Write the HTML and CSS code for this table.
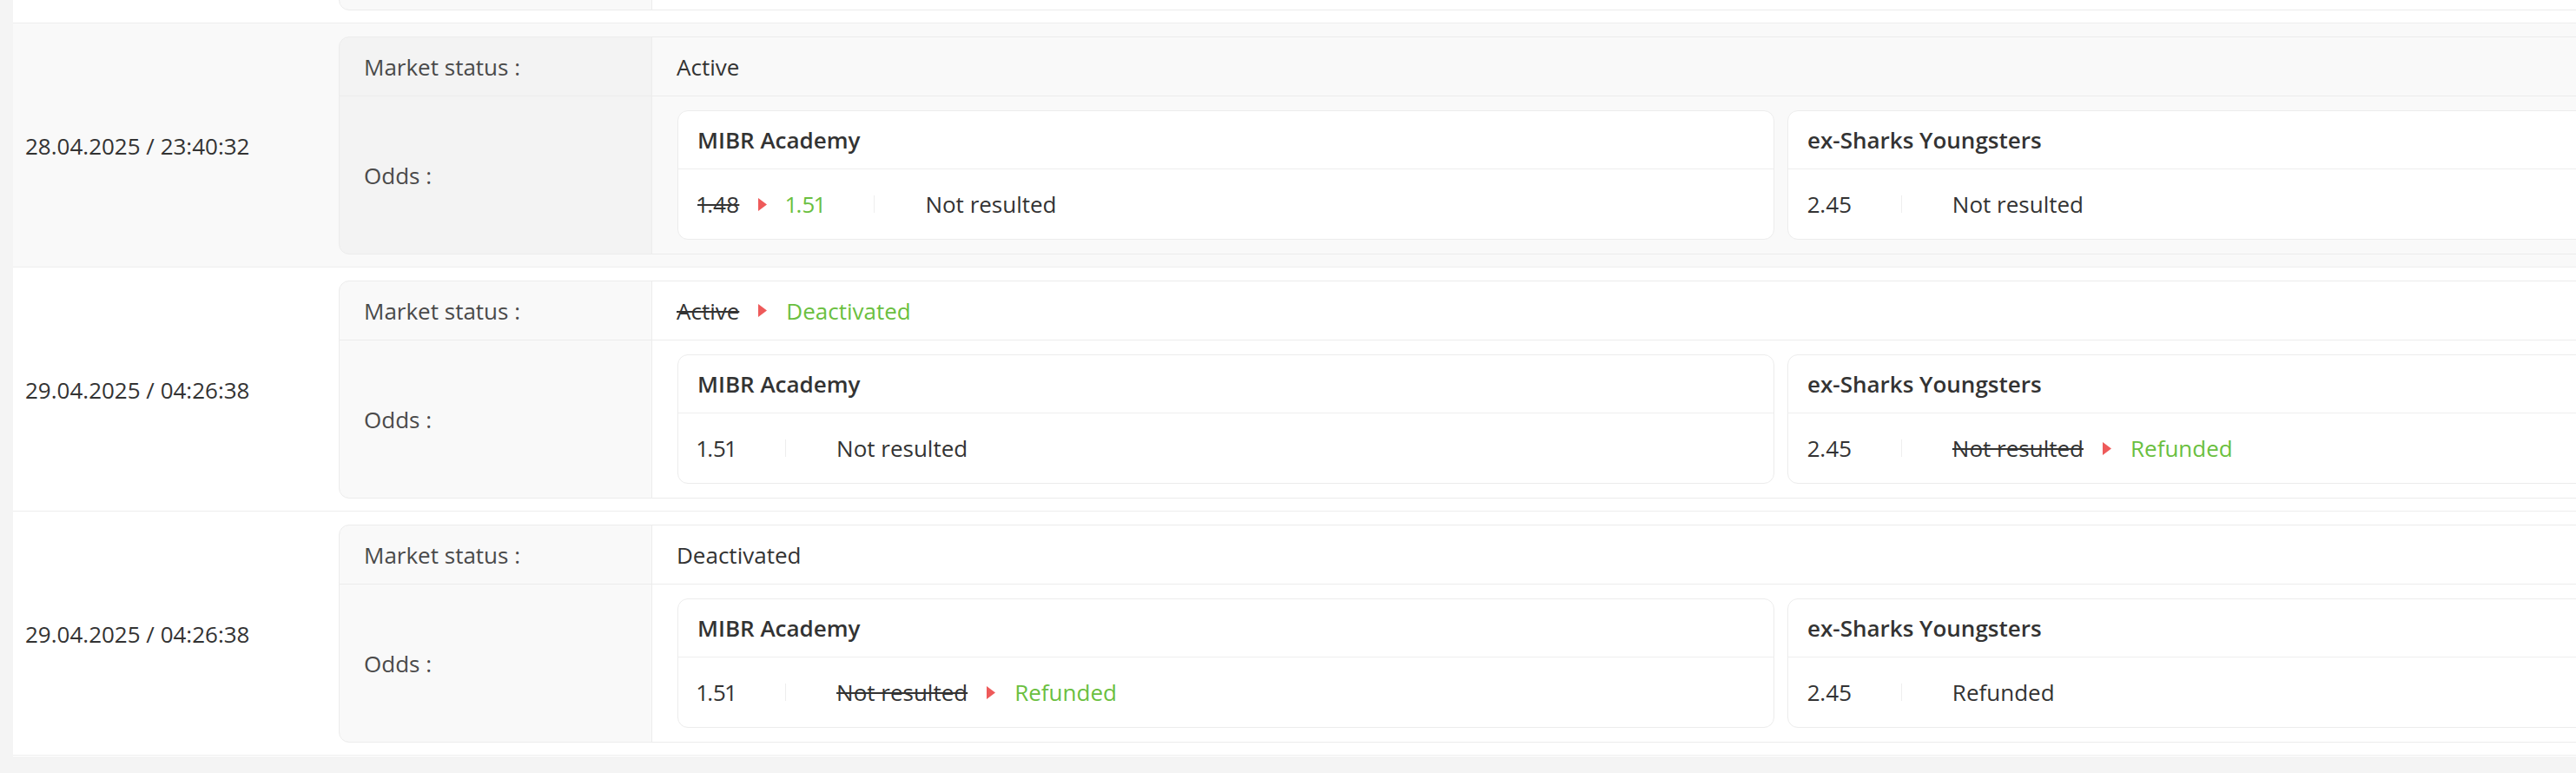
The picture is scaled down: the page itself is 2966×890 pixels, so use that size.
FILE: index.html
```html
<!DOCTYPE html>
<html lang="en">
<head>
<meta charset="utf-8">
<title>Market history</title>
<link rel="stylesheet" href="styles.css">
</head>
<body>
<div class="panel">

  <div class="row row--tail">
    <div class="row__date"></div>
    <div class="info">
      <div class="info__line info__line--status">
        <div class="info__label"></div>
        <div class="info__value"></div>
      </div>
      <div class="info__line info__line--odds">
        <div class="info__label"></div>
        <div class="info__value info__value--cards">
          <div class="sel">
            <div class="sel__head"></div>
            <div class="sel__body"></div>
          </div>
          <div class="sel">
            <div class="sel__head"></div>
            <div class="sel__body"></div>
          </div>
        </div>
      </div>
    </div>
  </div>

  <div class="row row--hover">
    <div class="row__date">28.04.2025 / 23:40:32</div>
    <div class="info">
      <div class="info__line info__line--status">
        <div class="info__label">Market status :</div>
        <div class="info__value">Active</div>
      </div>
      <div class="info__line info__line--odds">
        <div class="info__label">Odds :</div>
        <div class="info__value info__value--cards">
          <div class="sel">
            <div class="sel__head">MIBR Academy</div>
            <div class="sel__body">
              <div class="sel__odds"><span class="old">1.48</span><svg class="arrow" viewBox="0 0 10 15" width="10" height="15"><path d="M0 0 L10 7.5 L0 15 Z"/></svg><span class="new">1.51</span></div>
              <div class="sel__result">Not resulted</div>
            </div>
          </div>
          <div class="sel">
            <div class="sel__head">ex-Sharks Youngsters</div>
            <div class="sel__body">
              <div class="sel__odds">2.45</div>
              <div class="sel__result">Not resulted</div>
            </div>
          </div>
        </div>
      </div>
    </div>
  </div>

  <div class="row">
    <div class="row__date">29.04.2025 / 04:26:38</div>
    <div class="info">
      <div class="info__line info__line--status">
        <div class="info__label">Market status :</div>
        <div class="info__value"><span class="old">Active</span><svg class="arrow" viewBox="0 0 10 15" width="10" height="15"><path d="M0 0 L10 7.5 L0 15 Z"/></svg><span class="new">Deactivated</span></div>
      </div>
      <div class="info__line info__line--odds">
        <div class="info__label">Odds :</div>
        <div class="info__value info__value--cards">
          <div class="sel">
            <div class="sel__head">MIBR Academy</div>
            <div class="sel__body">
              <div class="sel__odds">1.51</div>
              <div class="sel__result">Not resulted</div>
            </div>
          </div>
          <div class="sel">
            <div class="sel__head">ex-Sharks Youngsters</div>
            <div class="sel__body">
              <div class="sel__odds">2.45</div>
              <div class="sel__result"><span class="old">Not resulted</span><svg class="arrow" viewBox="0 0 10 15" width="10" height="15"><path d="M0 0 L10 7.5 L0 15 Z"/></svg><span class="new">Refunded</span></div>
            </div>
          </div>
        </div>
      </div>
    </div>
  </div>

  <div class="row">
    <div class="row__date">29.04.2025 / 04:26:38</div>
    <div class="info">
      <div class="info__line info__line--status">
        <div class="info__label">Market status :</div>
        <div class="info__value">Deactivated</div>
      </div>
      <div class="info__line info__line--odds">
        <div class="info__label">Odds :</div>
        <div class="info__value info__value--cards">
          <div class="sel">
            <div class="sel__head">MIBR Academy</div>
            <div class="sel__body">
              <div class="sel__odds">1.51</div>
              <div class="sel__result"><span class="old">Not resulted</span><svg class="arrow" viewBox="0 0 10 15" width="10" height="15"><path d="M0 0 L10 7.5 L0 15 Z"/></svg><span class="new">Refunded</span></div>
            </div>
          </div>
          <div class="sel">
            <div class="sel__head">ex-Sharks Youngsters</div>
            <div class="sel__body">
              <div class="sel__odds">2.45</div>
              <div class="sel__result">Refunded</div>
            </div>
          </div>
        </div>
      </div>
    </div>
  </div>

</div>
</body>
</html>
```

FILE: styles.css
```css
html, body {
  margin: 0;
  padding: 0;
  overflow: hidden;
  background: #f4f4f4;
}

body {
  font-family: "Open Sans", "Liberation Sans", sans-serif;
  font-size: 26px;
  color: #333333;
}

.panel {
  margin: -254px 0 0 15px;
  width: 3351px;
  background: #ffffff;
  padding-bottom: 1px;
}

.row {
  display: flex;
  align-items: center;
  padding: 15px 15px 14px 0;
  border-bottom: 1px solid #eeeeee;
}

.row--hover {
  background: #f9f9f9;
}

.row--tail .row__date {
  align-self: stretch;
}

.row__date {
  flex: 0 0 375px;
  box-sizing: border-box;
  padding-left: 14px;
  line-height: 30px;
  color: #333333;
}

.info {
  flex: 1;
  border: 1px solid #ececec;
  border-radius: 12px;
  overflow: hidden;
}

.info__line {
  display: flex;
}

.info__line--status {
  height: 67px;
  border-bottom: 1px solid #ececec;
}

.info__label {
  flex: 0 0 360px;
  box-sizing: border-box;
  padding-left: 28px;
  display: flex;
  align-items: center;
  background: rgba(0, 0, 0, 0.025);
  border-right: 1px solid #ececec;
  color: #4a4a4a;
}

.info__value {
  flex: 1;
  display: flex;
  align-items: center;
  gap: 22px;
  padding: 0 29px 0 28px;
}

.info__value--cards {
  gap: 15px;
  padding: 16px 29px;
  align-items: stretch;
}

.sel {
  flex: 1;
  background: #ffffff;
  border: 1px solid #ececec;
  border-radius: 12px;
  overflow: hidden;
}

.sel__head {
  height: 66px;
  display: flex;
  align-items: center;
  padding-left: 22px;
  border-bottom: 1px solid #eeeeee;
  font-weight: 600;
  color: #333333;
}

.sel__body {
  height: 80px;
  display: flex;
  align-items: center;
  padding-left: 22px;
}

.sel__odds {
  display: flex;
  align-items: center;
  gap: 22px;
  height: 20px;
  padding-right: 57px;
  border-right: 1px solid #eeeeee;
  font-variant-numeric: proportional-nums;
}

.sel__result {
  display: flex;
  align-items: center;
  gap: 22px;
  padding-left: 58px;
}

.old {
  text-decoration: line-through;
  text-decoration-thickness: 2px;
  color: #333333;
}

.new {
  color: #6abf40;
}

.arrow {
  display: block;
  fill: #ee5a5a;
  flex: 0 0 10px;
}
```
